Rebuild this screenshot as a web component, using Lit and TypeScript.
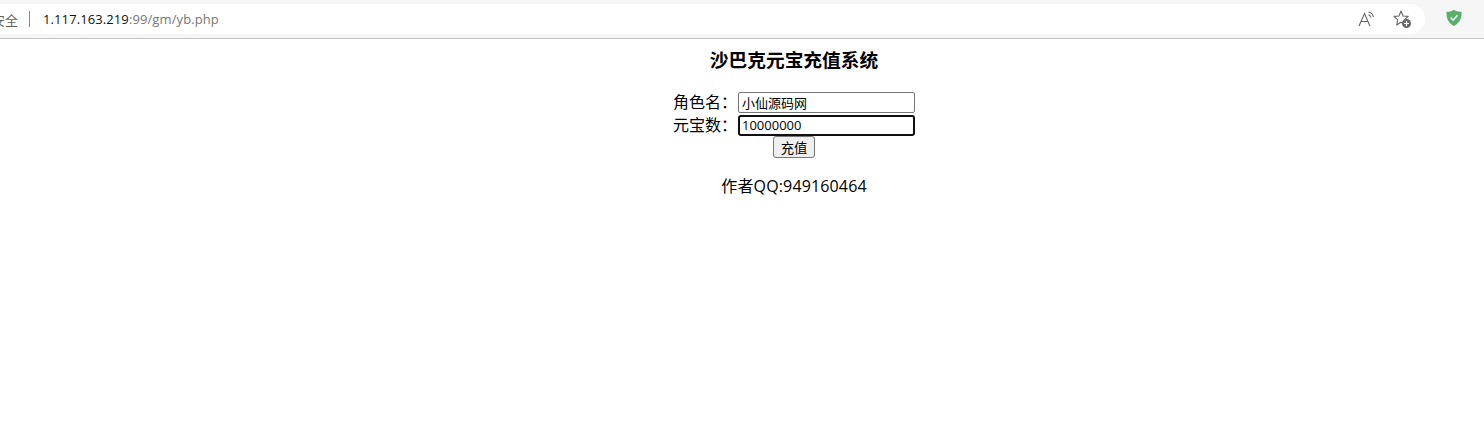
import { LitElement, html, css } from "lit";
import { customElement } from "lit/decorators.js";

@customElement("app-root")
export class AppRoot extends LitElement {
  static styles = css`
    :host {
      display: block;
      width: 1484px;
      height: 444px;
      overflow: hidden;
      background: #fff;
      color: #000;
      font-family: "Open Sans", "Noto Sans CJK SC", sans-serif;
    }
    .chrome {
      height: 38px;
      background: #f6f6f6;
      border-bottom: 1px solid #c4c4c4;
      display: flex;
      align-items: flex-start;
    }
    .pill {
      margin-top: 4px;
      width: 1425px;
      height: 30px;
      background: #fff;
      border-radius: 0 15px 15px 0;
      display: flex;
      align-items: center;
      font-size: 13px;
    }
    .secure {
      margin-left: -8px;
      color: #5f5f5f;
      white-space: nowrap;
    }
    .sep {
      width: 1px;
      height: 16px;
      background: #8a8a8a;
      margin: 0 13px 0 11px;
    }
    .url { letter-spacing: 0.1px; }
    .host { color: #111; }
    .rest { color: #767676; }
    .spacer { flex: 1; }
    .tool { display: block; }
    .read { margin-right: 17px; }
    .fav { margin-right: 13px; }
    .shield { margin: 9px 0 0 21px; display: block; }
    main {
      padding-left: 104px;
      text-align: center;
    }
    h3 {
      margin: 9px 0 0;
      font-size: 18.72px;
      line-height: 24px;
      font-weight: bold;
    }
    form {
      margin-top: 19px;
      display: flex;
      flex-direction: column;
      align-items: center;
      font-size: 16px;
    }
    .row {
      display: flex;
      align-items: center;
      height: 23px;
      width: 242px;
    }
    .row label {
      width: 65px;
      text-align: left;
      white-space: nowrap;
      line-height: 21px;
      padding-bottom: 1px;
    }
    .row input {
      box-sizing: border-box;
      width: 177px;
      height: 21px;
      padding: 1px 3px;
      margin: 0;
      border: 1px solid #767676;
      border-radius: 2px;
      font: 13px "Open Sans", "Noto Sans CJK SC", sans-serif;
      color: #000;
      background: #fff;
      outline: none;
    }
    .row input.focus {
      border: 2px solid #101010;
      border-radius: 3px;
      padding: 0 2px 2px;
    }
    button {
      box-sizing: border-box;
      width: 42px;
      height: 22px;
      padding: 0;
      margin: -1px 0 0;
      border: 1px solid #767676;
      border-radius: 3px;
      background: #efefef;
      color: #000;
      font: 13.33px "Open Sans", "Noto Sans CJK SC", sans-serif;
    }
    .author {
      margin: 17px 0 0;
      font-size: 16px;
      line-height: 22px;
      letter-spacing: 0.15px;
    }
  `;

  render() {
    return html`
      <div class="chrome">
        <div class="pill">
          <span class="secure">安全</span>
          <span class="sep"></span>
          <span class="url"><span class="host">1.117.163.219</span><span class="rest">:99/gm/yb.php</span></span>
          <span class="spacer"></span>
          <svg class="tool read" width="18" height="18" viewBox="0 0 18 18" fill="none" stroke="#666" stroke-width="1.1">
            <path d="M1 16 L6.5 3.5 L12 16 M3 11.5 H10" />
            <path d="M10.5 2 A6.5 6.5 0 0 1 15.5 7 M10.5 4.8 A4 4 0 0 1 13 7.5" />
          </svg>
          <svg class="tool fav" width="19" height="20" viewBox="0 0 19 20" fill="none">
            <path d="M8 2 L10 7 L15.2 7.4 L11.3 10.8 L12.3 16 L8 13.2 L3.7 16 L4.8 10.8 L1 7.4 L6 7 Z" stroke="#666" stroke-width="1.1" stroke-linejoin="round" />
            <circle cx="13.5" cy="14.5" r="4.5" fill="#666" />
            <path d="M11 14.5 H16 M13.5 12 V17" stroke="#fff" stroke-width="1.2" />
          </svg>
        </div>
        <svg class="shield" width="16" height="18" viewBox="0 0 16 18">
          <path d="M8 1 C10.5 2.3 13 2.8 15.5 2.8 C15.8 9 14 14 8 17 C2 14 .2 9 .5 2.8 C3 2.8 5.5 2.3 8 1 Z" fill="#5bad6c" />
          <path d="M4.5 8.5 L7.2 11 L11.5 6.2" fill="none" stroke="#e8f5ea" stroke-width="1.7" />
        </svg>
      </div>
      <main>
        <h3>沙巴克元宝充值系统</h3>
        <form @submit=${(e: Event) => e.preventDefault()}>
          <div class="row"><label>角色名：</label><input value="小仙源码网" /></div>
          <div class="row"><label>元宝数：</label><input class="focus" value="10000000" /></div>
          <button type="button">充值</button>
        </form>
        <p class="author">作者QQ:949160464</p>
      </main>
    `;
  }
}
